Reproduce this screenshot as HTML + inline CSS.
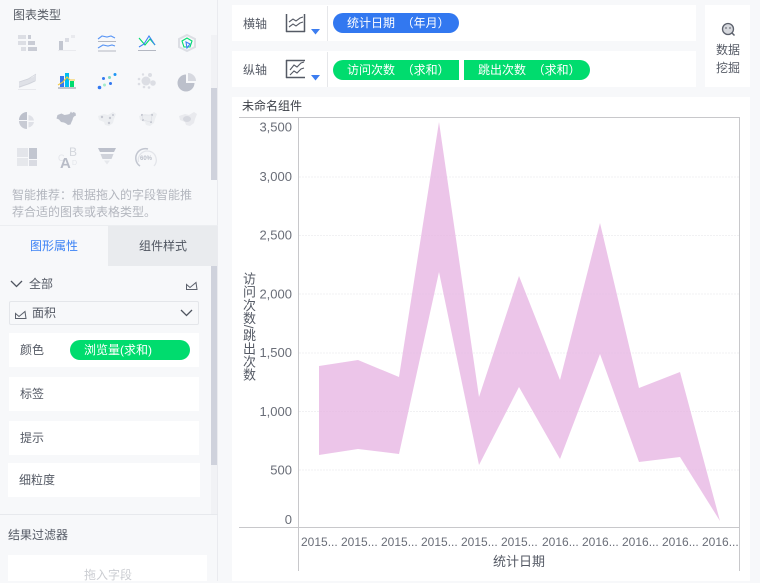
<!DOCTYPE html>
<html lang="zh"><head><meta charset="utf-8"><style>
*{box-sizing:border-box}
html,body{margin:0;padding:0}
body{width:760px;height:581px;overflow:hidden;background:#f7f8fa;position:relative;font-family:"Liberation Sans","Noto Sans CJK SC",sans-serif;font-size:12px;color:#555a65}
.a{position:absolute}
.w{position:absolute;background:#fff}
.t{position:absolute;line-height:16px;white-space:nowrap}
.pill{position:absolute;height:20px;line-height:20px;color:#fff;font-size:12px;white-space:pre;padding-left:14px}
.g{background:#00dc6e}.b{background:#3278f0}
svg{position:absolute;left:0;top:0;overflow:visible}
</style></head><body>
<div class="a" style="left:217px;top:0;width:1px;height:581px;background:#eaebef"></div>
<div class="t" style="left:13px;top:7px;color:#585d66">图表类型</div>
<div class="a" style="left:211px;top:35px;width:6px;height:145px;background:#f1f2f5"></div>
<div class="a" style="left:211px;top:88px;width:6px;height:92px;background:#cfd2dc"></div>

<svg width="218" height="180" viewBox="0 0 218 180">
<!-- row 1 -->
<g fill="#dcdee4"><rect x="18" y="35" width="8" height="4"/><rect x="18" y="41" width="8" height="4"/><rect x="21" y="47" width="5" height="4"/></g>
<g fill="#c9ccd5"><rect x="28" y="35" width="3" height="4"/><rect x="28" y="41" width="7" height="4"/><rect x="28" y="47" width="9" height="4"/></g>
<rect x="59" y="41" width="4" height="10" fill="#c2c6d0"/><rect x="65" y="38" width="4" height="4" fill="#dadce3"/><rect x="71" y="35" width="4" height="3" fill="#e9eaee"/>
<path d="M58 50.500H76" stroke="#e9eaee"/>
<g fill="none" stroke-width="1.100">
<path d="M98 39l4-3 5 1 4-1 4 2" stroke="#5a96f5"/><path d="M98 41.500H116" stroke="#b4b8c2"/>
<path d="M98 48l5-3 5 1 4-1 3 1" stroke="#5a96f5"/><path d="M98 51H116" stroke="#b4b8c2"/>
<path d="M139 38l6 7 5-6 5 6" stroke="#00dc6e"/><path d="M139 47l5-3 5-8 6 9" stroke="#3c82f5"/><path d="M138 50.500H156" stroke="#b4b8c2"/>
<path d="M187 35l8 4v8l-8 4-8-4v-8z" stroke="#dcdee4" stroke-width="2"/><path d="M182 41l5-3 5 3-2 6-6 0z" stroke="#00dc6e"/><path d="M186 42l4 2-3 4z" stroke="#3c82f5"/>
</g>
<!-- row 2 -->
<path d="M19 82l8-3 6-2 3-3v7l-6 3-6 2-5 2z" fill="#dfe1e7"/><path d="M19 82l9-3 8-5M19 87l9-3 7-3" fill="none" stroke="#cfd2da" stroke-width=".7"/><path d="M18 89.500H36" stroke="#e8e9ed"/>
<rect x="60" y="76" width="4" height="11" fill="#3278f0"/><rect x="65" y="73" width="4" height="14" fill="#00bef0"/><rect x="70" y="81" width="4" height="6" fill="#00dc6e"/>
<path d="M58 85l5-3 4-5 3 3 5 0" fill="none" stroke="#f5c83c" stroke-width="1.100"/><path d="M58 88H76" stroke="#8d929d"/>
<g fill="#3278f0"><circle cx="99.500" cy="87.500" r="1.800"/><circle cx="103.500" cy="78.500" r="1.500"/><circle cx="110.500" cy="83.500" r="1.500"/><circle cx="115" cy="74.500" r="1.500" fill="#1e96f5"/></g><circle cx="104.500" cy="85" r="1.500" fill="#a5eccb"/><circle cx="109.500" cy="77.500" r="1.500" fill="#7dd9c0"/>
<g fill="#dcdee4"><circle cx="146" cy="81" r="4.500"/><circle cx="153" cy="83" r="2.800"/><circle cx="150" cy="75" r="2"/><circle cx="143" cy="74.500" r="1.200"/><circle cx="139" cy="79" r="1.300"/><circle cx="139" cy="84" r="1.300"/><circle cx="144" cy="87" r="1.300"/><circle cx="149" cy="87.500" r="1.300"/></g>
<path d="M186 74.500a8.500 8.500 0 1 0 8.500 8.500H186z" fill="#bcc0cb"/><path d="M188 73a8 8 0 0 1 8 8h-8z" fill="#d7d9e0"/><path d="M186.500 74v8.500H195" fill="none" stroke="#f7f8fa"/>
<!-- row 3 -->
<path d="M27 112a8 8 0 0 0-8 8h8z" fill="#bcc0cb"/><path d="M19 121a8 8 0 0 0 8 8v-8z" fill="#c8cbd4"/><path d="M28.500 115a7 7 0 0 1 5.500 5.500h-5.500z" fill="#dfe1e7"/><path d="M28.500 122h5.500a7 7 0 0 1-5.500 5.500z" fill="#dfe1e7"/>
<path d="M57.500 115l4-1.500 3 1.500 3-.5 2-.5 1.500-2.500 1 1.500 1.500-1 2 1 .5 2.500-2 1-1 1.500-.5 2-1 2-1 2.500-2.500.5-2-1.500-2-1-3-.5-2-2.500-2.500-1z" fill="#bcc0cb"/>
<path d="M98 116l6-2 4 1 5-3 3 2-2 5-1 4-4 3-4-1-1-3-5-2z" fill="#eceef1"/><g fill="#c5c8d1"><circle cx="102" cy="117" r="1.200"/><circle cx="110" cy="118" r="1.200"/><circle cx="113" cy="115" r="1"/><circle cx="109" cy="123" r="1.200"/></g>
<path d="M139 116l6-2 4 1 5-3 3 2-2 5-1 4-4 3-4-1-1-3-5-2z" fill="#eceef1"/><g fill="#c0c4cd"><circle cx="142" cy="115" r="1.100"/><circle cx="143" cy="120" r="1.100"/><circle cx="152" cy="115" r="1.100"/><circle cx="151" cy="122" r="1.100"/></g><path d="M142 115l10 0-1 7-8-2z" fill="none" stroke="#dcdee4" stroke-width=".6"/>
<path d="M179 116l6-2 4 1 5-3 3 2-2 5-1 4-4 3-4-1-1-3-5-2z" fill="#e9eaee"/><ellipse cx="187" cy="119" rx="4" ry="3" fill="#d6d8df"/>
<!-- row 4 -->
<rect x="17" y="148" width="11" height="9" fill="#e3e5ea"/><rect x="17" y="158" width="11" height="8" fill="#e6e8ec"/><rect x="29" y="148" width="8" height="11" fill="#c2c6d0"/><rect x="29" y="160" width="8" height="6" fill="#d9dbe2"/>
<text x="58" y="161" font-size="9" fill="#e3e5ea">C</text><text x="69" y="156" font-size="12" fill="#d3d6dc">B</text><text x="72" y="165" font-size="7" fill="#e3e5ea">D</text><text x="60" y="168" font-size="15" font-weight="bold" fill="#b8bcc7" font-family="Liberation Sans">A</text>
<path d="M98 148h18l-2 4H100z" fill="#bcc0cb"/><path d="M100.500 154h13l-2 5h-9z" fill="#cfd2da"/><path d="M104 160.500h6l-3 4z" fill="#e6e8ec"/>
<path d="M138.500 162a9 9 0 1 1 15.500 4" fill="none" stroke="#e3e5ea" stroke-width="1.300"/><path d="M140 166a9.500 9.500 0 0 1 8-17" fill="none" stroke="#c2c6d0" stroke-width="1.500"/>
<text x="140" y="160" font-size="6" font-weight="bold" fill="#bcc0ca">60%</text>
</svg>

<div class="t" style="left:12px;top:187px;color:#b3b6be;line-height:17px;width:190px;white-space:normal">智能推荐：根据拖入的字段智能推荐合适的图表或表格类型。</div>

<div class="a" style="left:0;top:225px;width:218px;height:1px;background:#eceef1"></div>
<div class="a" style="left:108px;top:226px;width:109px;height:40px;background:#e9ebee"></div>
<div class="t" style="left:30px;top:238px;color:#3c82f5">图形属性</div>
<div class="t" style="left:139px;top:238px;color:#4f5560">组件样式</div>
<div class="a" style="left:211px;top:266px;width:6px;height:248px;background:#f1f2f5"></div>
<div class="a" style="left:211px;top:266px;width:6px;height:199px;background:#cfd2dc"></div>

<svg width="218" height="581" viewBox="0 0 218 581">
<path d="M11 281l5.500 5.500 5.500-5.500M181 310l5.500 5.500 5.500-5.500" fill="none" stroke="#4f5560" stroke-width="1.300"/>
<path d="M186 289.500H197.500M186.500 289.500v-5l3.500 3 6-5 1 7" fill="none" stroke="#5c616c"/>
<path d="M15 318.500H26.500M15.500 318.500v-5l3.500 3 6-5 1 7" fill="none" stroke="#5c616c"/>
</svg>
<div class="t" style="left:29px;top:276px">全部</div>
<div class="a" style="left:9px;top:301px;width:190px;height:24px;border:1px solid #e4e6ea;border-radius:2px"></div>
<div class="t" style="left:32px;top:305px">面积</div>

<div class="w" style="left:9px;top:333px;width:190px;height:34px"></div>
<div class="t" style="left:20px;top:342px">颜色</div>
<div class="pill g" style="left:70px;top:340px;width:120px;border-radius:10px">浏览量(求和)</div>
<div class="w" style="left:9px;top:377px;width:190px;height:34px"></div>
<div class="t" style="left:20px;top:386px">标签</div>
<div class="w" style="left:9px;top:421px;width:190px;height:34px"></div>
<div class="t" style="left:20px;top:430px">提示</div>
<div class="w" style="left:8px;top:463px;width:192px;height:34px"></div>
<div class="t" style="left:19px;top:472px">细粒度</div>

<div class="a" style="left:0;top:514px;width:218px;height:1px;background:#e7e9ed"></div>
<div class="t" style="left:8px;top:527px">结果过滤器</div>
<div class="w" style="left:8px;top:555px;width:199px;height:26px"></div>
<div class="t" style="left:84px;top:567px;color:#cbcdd2">拖入字段</div>

<!-- axis bars -->
<div class="w" style="left:232px;top:5px;width:464px;height:36px"></div>
<div class="w" style="left:232px;top:51px;width:464px;height:36px"></div>
<div class="a" style="left:327px;top:6px;width:1px;height:35px;background:#e6e7ea"></div>
<div class="a" style="left:327px;top:52px;width:1px;height:35px;background:#e6e7ea"></div>
<div class="t" style="left:243px;top:16px">横轴</div>
<div class="t" style="left:243px;top:62px">纵轴</div>
<svg width="760" height="100" viewBox="0 0 760 100">
<g fill="none" stroke="#555a65" stroke-width="1.500">
<path d="M286.500 14v18M304.500 14v18M286 31.500H305"/>
<path d="M289 22l4-3 3 2 4-3 3-1M289 27l4-3 3 2 4-3 3-1" stroke-width="1.100"/>
<path d="M286 60.500H305M286.500 60v18M286 77.500H305"/>
<path d="M290 70l4-5 3 2 4-4 3-1M290 75l4-4 3 2 4-4 3-1" stroke-width="1.100"/>
</g>
<path d="M311 29h9l-4.500 5.500zM311 75h9l-4.500 5.500z" fill="#3c7df0"/>
</svg>
<div class="pill b" style="left:333px;top:13px;width:126px;border-radius:10px">统计日期  （年月）</div>
<div class="pill g" style="left:333px;top:60px;width:126px;border-radius:10px 0 0 10px">访问次数  （求和）</div>
<div class="pill g" style="left:464px;top:60px;width:126px;border-radius:0 10px 10px 0">跳出次数  （求和）</div>

<div class="w" style="left:705px;top:5px;width:45px;height:82px"></div>
<svg width="760" height="100" viewBox="0 0 760 100">
<circle cx="728" cy="29" r="5.500" fill="#d6d8dd" stroke="#5c616c" stroke-width="1.300"/><path d="M732 33l2.500 2.500" stroke="#5c616c" stroke-width="1.500"/><path d="M726 27v2M730 27v2" stroke="#5c616c"/>
</svg>
<div class="t" style="left:716px;top:41px;line-height:18px;width:26px;white-space:normal;color:#555a65">数据挖掘</div>

<!-- chart -->
<div class="w" style="left:232px;top:97px;width:518px;height:484px"></div>
<div class="t" style="left:242px;top:98px;color:#3c4048;font-size:12px">未命名组件</div>
<svg width="760" height="581" viewBox="0 0 760 581">
<g stroke="#f1f1f3" stroke-dasharray="2 1"><path d="M299 177H739M299 235.500H739M299 294H739M299 353H739M299 411.500H739M299 470H739"/></g>
<polygon points="319,366 358,360 399,377 439,122 479,397 519,276 560,380 600,223 639,388 680,372 720,521 680,457 639,462 600,354 560,459 519,387 479,465 439,272 399,454 358,449 319,455" fill="#e6b1e1" fill-opacity=".75"/>
<g stroke="#c8c8cb" fill="none"><path d="M239 117.500H739.500V571M239 527.500H739.500M298.500 117V571"/></g>
<g font-size="13" fill="#6a6e78" text-anchor="end" font-family="Liberation Sans">
<text x="292" y="131.500">3,500</text><text x="292" y="181">3,000</text><text x="292" y="239.500">2,500</text><text x="292" y="298.500">2,000</text><text x="292" y="357">1,500</text><text x="292" y="416">1,000</text><text x="292" y="474.500">500</text><text x="292" y="524">0</text>
</g>
<g font-size="12" fill="#6a6e78" font-family="Liberation Sans">
<text x="301" y="546">2015...</text><text x="341" y="546">2015...</text><text x="381" y="546">2015...</text><text x="421" y="546">2015...</text><text x="461" y="546">2015...</text><text x="501" y="546">2015...</text><text x="542" y="546">2016...</text><text x="582" y="546">2016...</text><text x="622" y="546">2016...</text><text x="662" y="546">2016...</text><text x="702" y="546">2016...</text>
</g>
</svg>
<div class="t" style="left:493px;top:554px;font-size:13px">统计日期</div>
<div class="a" style="left:241px;top:272px;height:112px;width:14px;line-height:14px;font-size:13px;writing-mode:vertical-rl;white-space:nowrap;letter-spacing:.2px">访问次数/跳出次数</div>
</body></html>
